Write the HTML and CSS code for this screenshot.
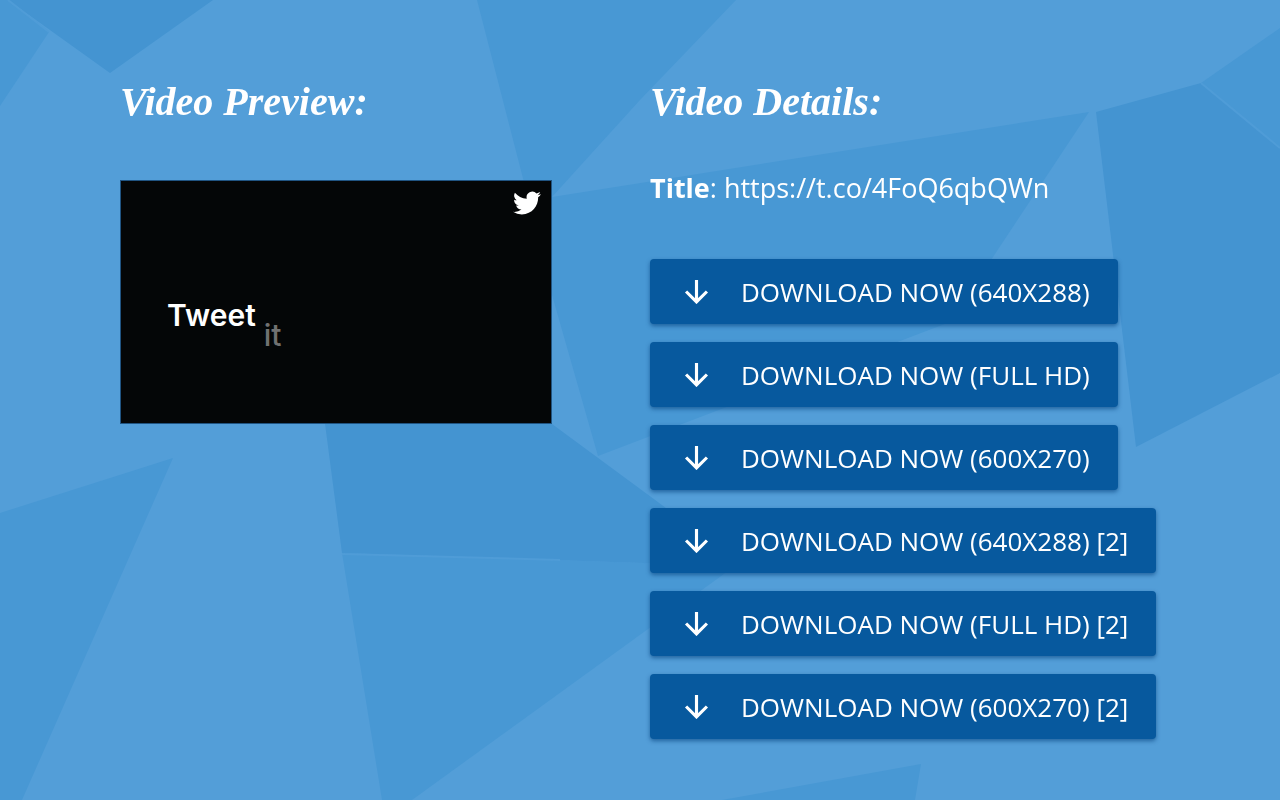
FILE: index.html
```html
<!doctype html>
<html lang="en">
  <head>
    <meta charset="UTF-8" />
    <meta name="viewport" content="width=device-width, initial-scale=1.0" />
    <title>Video Download</title>
    <link rel="stylesheet" href="styles.css">
  </head>
  <body>
    <svg class="backdrop" viewBox="0 0 1280 800" preserveAspectRatio="xMidYMid slice" aria-hidden="true">
      <g class="facet">
        <path d="M0 0H8L49 32L0 106Z"></path>
        <path d="M477 0H736L640 100L552 197L526 190Z"></path>
        <path d="M552 197L1089 112L950 322L598 456L552 295Z"></path>
        <path d="M1201 83L1280 28V148Z"></path>
        <path d="M342 553L735 566L412 800H382Z"></path>
        <path d="M0 513L173 458L22 800H0Z"></path>
        <path d="M722 800L921 764L915 800Z"></path>
      </g>
      <g class="facet-dark">
        <path d="M8 0L110 73L213 0Z"></path>
        <path d="M1096 112L1201 83L1280 148V373L1136 447Z"></path>
        <path d="M314 340L520 400L552 424L666 508L735 566L342 553Z"></path>
      </g>
      <path class="facet-edge" d="M8 0L49 32M1201 83L1280 148M342 554L560 560"></path>
    </svg>

    <main class="container">
      <section class="preview">
        <h2>Video Preview:</h2>
        <div class="video">
          <svg class="bird" viewBox="0 0 24 24" role="img" aria-label="Twitter">
            <path d="M23.95 4.57a10 10 0 0 1-2.82.77 4.96 4.96 0 0 0 2.16-2.72c-.95.55-2 .95-3.13 1.18a4.92 4.92 0 0 0-8.38 4.48C7.69 8.1 4.07 6.13 1.64 3.16a4.93 4.93 0 0 0 1.52 6.57 4.9 4.9 0 0 1-2.23-.61v.06a4.92 4.92 0 0 0 3.95 4.83 5 5 0 0 1-2.21.08 4.94 4.94 0 0 0 4.6 3.42A9.87 9.87 0 0 1 0 19.54a13.99 13.99 0 0 0 7.55 2.21c9.05 0 14-7.5 14-13.98 0-.21 0-.42-.02-.63a9.94 9.94 0 0 0 2.42-2.57z"></path>
          </svg>
          <p class="caption">Tweet <span class="caption-next">it</span></p>
        </div>
      </section>

      <section class="details">
        <h2>Video Details:</h2>
        <p class="title"><strong>Title</strong>: https://t.co/4FoQ6qbQWn</p>

        <svg class="sprite" aria-hidden="true">
          <symbol id="arrow" viewBox="0 0 24 24">
            <path d="M12 1V22M2 12L12 22L22 12"></path>
          </symbol>
        </svg>

        <div class="downloads">
          <a class="button" href="#"><svg class="arrow" aria-hidden="true"><use href="#arrow"></use></svg>Download now (640x288)</a>
          <a class="button" href="#"><svg class="arrow" aria-hidden="true"><use href="#arrow"></use></svg>Download now (Full HD)</a>
          <a class="button" href="#"><svg class="arrow" aria-hidden="true"><use href="#arrow"></use></svg>Download now (600x270)</a>
          <a class="button" href="#"><svg class="arrow" aria-hidden="true"><use href="#arrow"></use></svg>Download now (640x288) [2]</a>
          <a class="button" href="#"><svg class="arrow" aria-hidden="true"><use href="#arrow"></use></svg>Download now (Full HD) [2]</a>
          <a class="button" href="#"><svg class="arrow" aria-hidden="true"><use href="#arrow"></use></svg>Download now (600x270) [2]</a>
        </div>
      </section>
    </main>
  </body>
</html>
```

FILE: styles.css
```css
* {
  margin: 0;
  padding: 0;
  box-sizing: border-box;
}

body {
  min-height: 100vh;
  background-color: #539ed8;
  color: #fff;
  font-family: "Open Sans", "Noto Sans", sans-serif;
}

/* Low-poly background */
.backdrop {
  position: fixed;
  inset: 0;
  z-index: -1;
  width: 100%;
  height: 100%;
}

.facet {
  fill: #4898d4;
}

.facet-dark {
  fill: #4494d1;
}

.facet-edge {
  fill: none;
  stroke: #4f9cd7;
  stroke-width: 2;
}

.container {
  display: grid;
  grid-template-columns: 1fr 1fr;
  padding: 72px 100px 60px 120px;
}

.preview {
  padding-right: 98px;
}

h2 {
  font-family: "Liberation Serif", serif;
  font-size: 40px;
  font-style: italic;
  font-weight: 700;
  line-height: 60px;
  white-space: nowrap;
}

.video {
  position: relative;
  aspect-ratio: 432 / 244;
  margin-top: 48px;
  padding: 116px 46px 0;
  background-color: #040607;
  border: 1px solid #205482;
}

.bird {
  position: absolute;
  top: 8px;
  right: 10px;
  width: 28px;
  height: 28px;
  fill: #fff;
}

.caption {
  display: flex;
  gap: 8px;
  font-family: Inter, sans-serif;
  font-size: 30px;
  font-weight: 600;
  line-height: 36px;
}

.caption-next {
  padding-top: 20px;
  color: #707171;
  font-weight: 500;
}

.title {
  margin: 36px 0;
  font-size: 27px;
  line-height: 40px;
  white-space: nowrap;
}

.sprite {
  display: none;
}

.downloads {
  display: flex;
  flex-direction: column;
  align-items: flex-start;
  gap: 18px;
  margin-top: 51px;
}

.button {
  display: flex;
  align-items: center;
  gap: 32px;
  height: 65px;
  padding: 0 28px 0 34px;
  border-radius: 4px;
  background-color: #07599e;
  box-shadow: 0 2px 4px rgba(0, 60, 120, 0.6);
  color: #fff;
  font-size: 26px;
  text-decoration: none;
  text-transform: uppercase;
  white-space: nowrap;
}

.button:hover {
  background-color: #0a66b3;
}

.arrow {
  width: 25px;
  height: 25px;
  fill: none;
  stroke: #fff;
  stroke-width: 3;
}

@media (max-width: 900px) {
  .container {
    grid-template-columns: 1fr;
    gap: 40px;
    padding: 40px 24px;
  }

  .preview {
    padding-right: 0;
  }
}
```
